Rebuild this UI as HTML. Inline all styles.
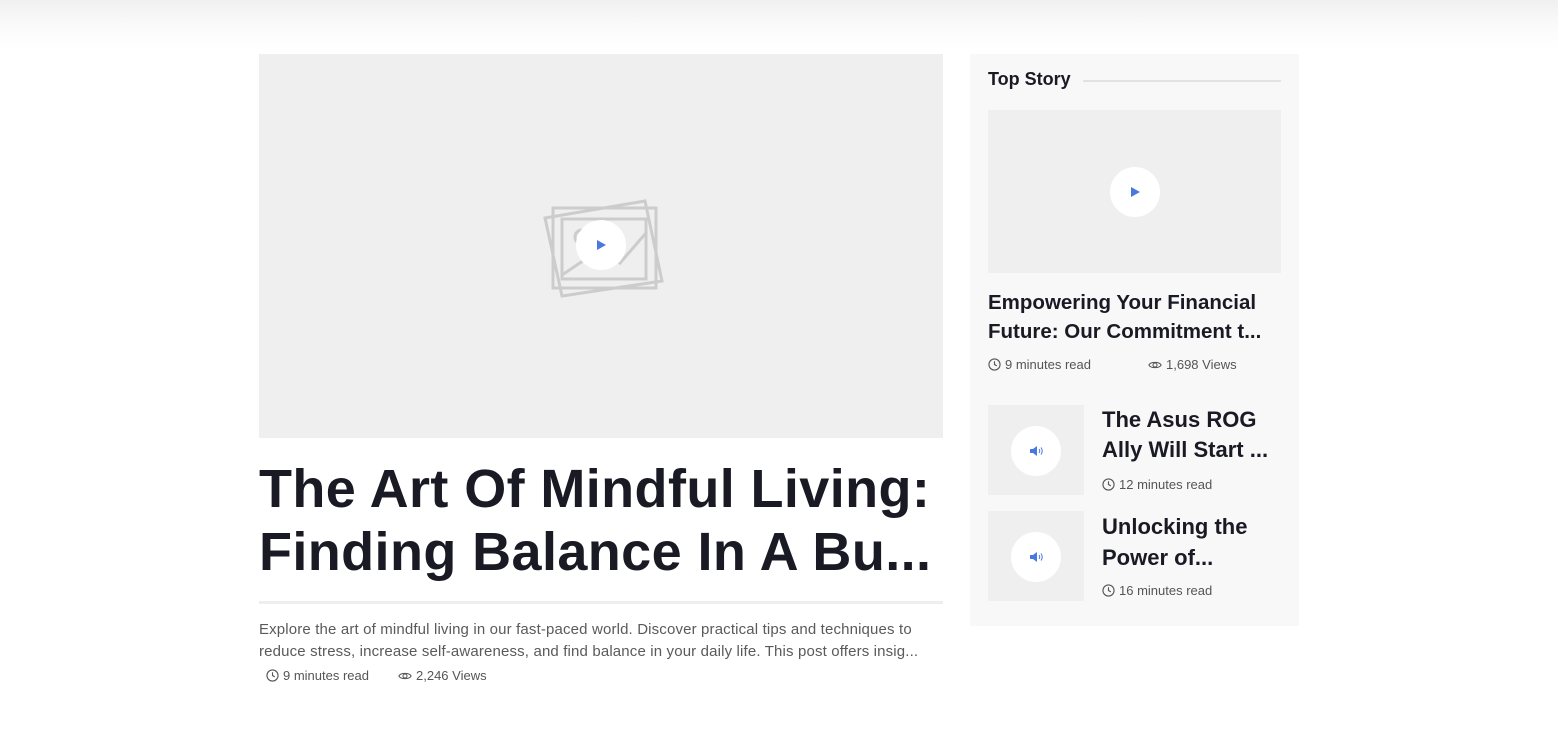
<!DOCTYPE html>
<html><head><meta charset="utf-8"><style>
*{margin:0;padding:0;box-sizing:border-box}
body{width:1558px;height:742px;background:#fff;font-family:"Liberation Sans",sans-serif;color:#1a1a25;position:relative;overflow:hidden}
.hdr{position:absolute;left:0;top:0;width:1558px;height:50px;background:linear-gradient(#f0f0f0,#fafafa 50%,#fff)}
.abs{position:absolute}
.ph{background:#efefef}
.circ{position:absolute;border-radius:50%;background:#fff;display:flex;align-items:center;justify-content:center}
.meta{font-size:13px;color:#555;display:flex;align-items:center;gap:4px}
</style></head><body>
<div class="hdr"></div>
<div class="abs ph" style="left:259px;top:54px;width:684px;height:384px"></div>
<svg class="abs" style="left:540px;top:193px" width="130" height="110" viewBox="0 0 130 110" fill="none" stroke="#ccc" stroke-width="3">
<polygon points="5,25 105,8 122,88 22,103"/>
<rect x="13" y="15" width="103" height="80"/>
<rect x="22" y="26" width="84" height="60"/>
<polyline points="22,82 62,55 80,70 106,40"/>
<circle cx="42" cy="44" r="7"/>
</svg>
<div class="circ" style="left:576px;top:220px;width:50px;height:50px"><svg width="10" height="10"><polygon points="1,0 10,5 1,10" fill="#4a78e0"/></svg></div>
<div class="abs" style="left:259px;top:458px;width:700px;font-size:54px;font-weight:bold;line-height:63px;letter-spacing:0.4px">The Art Of Mindful Living:<br>Finding Balance In A Bu...</div>
<div class="abs" style="left:259px;top:601px;width:684px;height:3px;background:#eee"></div>
<div class="abs" style="left:259px;top:619px;width:700px;font-size:15px;letter-spacing:0.15px;line-height:22px;color:#5a5a5a">Explore the art of mindful living in our fast-paced world. Discover practical tips and techniques to<br>reduce stress, increase self-awareness, and find balance in your daily life. This post offers insig...</div>
<div class="abs meta" style="left:266px;top:668px"><svg width="13" height="13" viewBox="0 0 14 14" fill="none" stroke="#555" stroke-width="1.2"><circle cx="7" cy="7" r="6"/><path d="M7 3.5V7l2.5 1.5"/></svg>9 minutes read</div>
<div class="abs meta" style="left:398px;top:668px"><svg width="14" height="12" viewBox="0 0 16 12" fill="none" stroke="#555" stroke-width="1.2"><path d="M1 6C3 2 13 2 15 6C13 10 3 10 1 6Z"/><circle cx="8" cy="6" r="2.3"/></svg>2,246 Views</div>

<div class="abs" style="left:970px;top:54px;width:329px;height:572px;background:#f8f8f8"></div>
<div class="abs" style="left:988px;top:69px;font-size:18px;font-weight:bold">Top Story</div>
<div class="abs" style="left:1083px;top:80px;width:198px;height:2px;background:#e2e2e2"></div>
<div class="abs ph" style="left:988px;top:110px;width:293px;height:163px"></div>
<div class="circ" style="left:1110px;top:167px;width:50px;height:50px"><svg width="10" height="10"><polygon points="1,0 10,5 1,10" fill="#4a78e0"/></svg></div>
<div class="abs" style="left:988px;top:288px;width:310px;font-size:20.5px;font-weight:bold;line-height:29px">Empowering Your Financial<br>Future: Our Commitment t...</div>
<div class="abs meta" style="left:988px;top:357px"><svg width="13" height="13" viewBox="0 0 14 14" fill="none" stroke="#555" stroke-width="1.2"><circle cx="7" cy="7" r="6"/><path d="M7 3.5V7l2.5 1.5"/></svg>9 minutes read</div>
<div class="abs meta" style="left:1148px;top:357px"><svg width="14" height="12" viewBox="0 0 16 12" fill="none" stroke="#555" stroke-width="1.2"><path d="M1 6C3 2 13 2 15 6C13 10 3 10 1 6Z"/><circle cx="8" cy="6" r="2.3"/></svg>1,698 Views</div>

<div class="abs ph" style="left:988px;top:405px;width:96px;height:90px"></div>
<div class="circ" style="left:1011px;top:426px;width:50px;height:50px"><svg width="14" height="12" viewBox="0 0 14 12"><path d="M1 4h3l4-3v10L4 8H1z" fill="#4a78e0"/><path d="M10 4q1.5 2 0 4M12 2.5q2.5 3.5 0 7" stroke="#4a78e0" fill="none" stroke-width="1"/></svg></div>
<div class="abs" style="left:1102px;top:405px;font-size:22px;font-weight:bold;line-height:30px">The Asus ROG<br>Ally Will Start ...</div>
<div class="abs meta" style="left:1102px;top:477px"><svg width="13" height="13" viewBox="0 0 14 14" fill="none" stroke="#555" stroke-width="1.2"><circle cx="7" cy="7" r="6"/><path d="M7 3.5V7l2.5 1.5"/></svg>12 minutes read</div>

<div class="abs ph" style="left:988px;top:511px;width:96px;height:90px"></div>
<div class="circ" style="left:1011px;top:532px;width:50px;height:50px"><svg width="14" height="12" viewBox="0 0 14 12"><path d="M1 4h3l4-3v10L4 8H1z" fill="#4a78e0"/><path d="M10 4q1.5 2 0 4M12 2.5q2.5 3.5 0 7" stroke="#4a78e0" fill="none" stroke-width="1"/></svg></div>
<div class="abs" style="left:1102px;top:511px;font-size:22px;font-weight:bold;line-height:31px">Unlocking the<br>Power of...</div>
<div class="abs meta" style="left:1102px;top:583px"><svg width="13" height="13" viewBox="0 0 14 14" fill="none" stroke="#555" stroke-width="1.2"><circle cx="7" cy="7" r="6"/><path d="M7 3.5V7l2.5 1.5"/></svg>16 minutes read</div>
</body></html>
